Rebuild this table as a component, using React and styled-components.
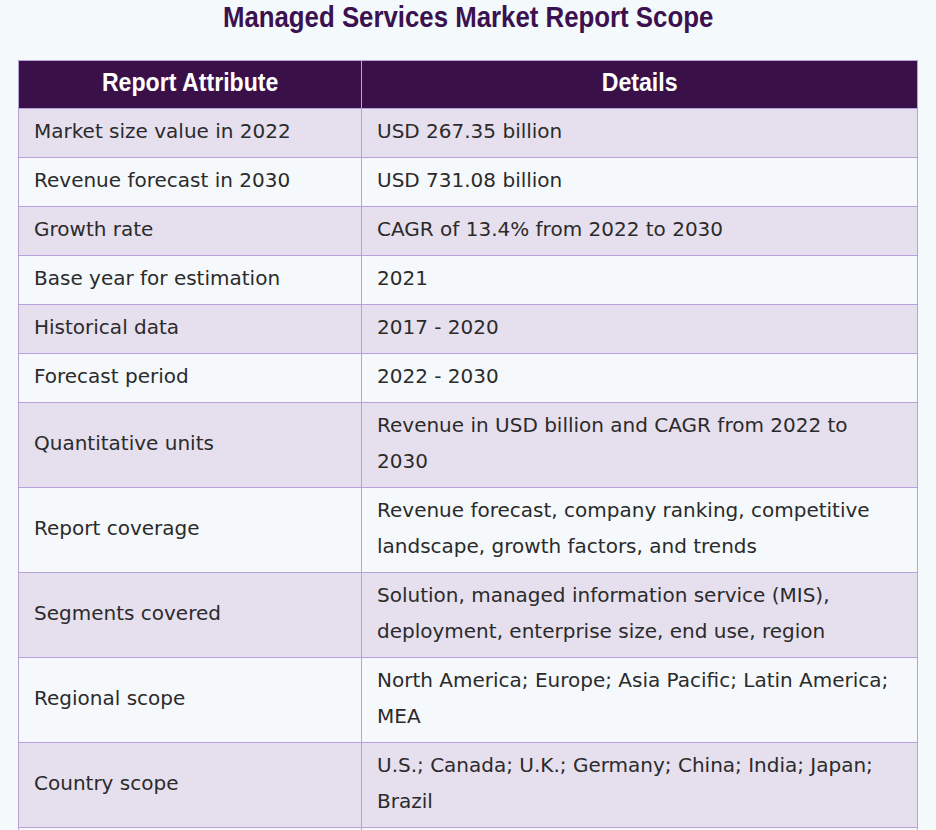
import React from "react";
import styled, { createGlobalStyle } from "styled-components";

const rows = [
	["Market size value in 2022", "USD 267.35 billion"],
	["Revenue forecast in 2030", "USD 731.08 billion"],
	["Growth rate", "CAGR of 13.4% from 2022 to 2030"],
	["Base year for estimation", "2021"],
	["Historical data", "2017 - 2020"],
	["Forecast period", "2022 - 2030"],
	["Quantitative units", "Revenue in USD billion and CAGR from 2022 to 2030"],
	["Report coverage", "Revenue forecast, company ranking, competitive landscape, growth factors, and trends"],
	["Segments covered", "Solution, managed information service (MIS), deployment, enterprise size, end use, region"],
	["Regional scope", "North America; Europe; Asia Pacific; Latin America; MEA"],
	["Country scope", "U.S.; Canada; U.K.; Germany; China; India; Japan; Brazil"],
];

function App() {
	return (
		<Page>
			<GlobalStyle />
			<Title>
				<Narrow $scale={0.86}>Managed Services Market Report Scope</Narrow>
			</Title>
			<Table>
				<thead>
					<tr>
						<Th>
							<Narrow $scale={0.89}>Report Attribute</Narrow>
						</Th>
						<Th>
							<Narrow $scale={0.89}>Details</Narrow>
						</Th>
					</tr>
				</thead>
				<tbody>
					{rows.map(([attr, detail], i) => (
						<Row key={attr} $odd={i % 2 === 0}>
							<Td>{attr}</Td>
							<Td>{detail}</Td>
						</Row>
					))}
					{/* next row continues below the fold */}
					<Row $odd={false}>
						<Td />
						<Td />
					</Row>
				</tbody>
			</Table>
		</Page>
	);
}

const GlobalStyle = createGlobalStyle`
	body {
		margin: 0;
		background: #f4f9fc;
		overflow: hidden;
	}
`;

const Page = styled.div`
	padding: 0 18px;
	font-family: "DejaVu Sans", Verdana, sans-serif;
	color: #2b2b2b;
`;

// condensed look, no narrow font installed
const Narrow = styled.span`
	display: inline-block;
	transform: scaleX(${(p) => p.$scale});
	white-space: nowrap;
`;

const Title = styled.h1`
	margin: 0;
	padding: 1px 0 0;
	height: 60px;
	text-align: center;
	font-family: "Liberation Sans", Arial, sans-serif;
	font-weight: 700;
	font-size: 30px;
	line-height: 32px;
	color: #3b1150;
	box-sizing: border-box;
`;

const Table = styled.table`
	width: 900px;
	border-collapse: collapse;
	table-layout: fixed;
	border: 1px solid #b9a2dc;
`;

const Th = styled.th`
	background: #3a1048;
	color: #fff;
	font-family: "Liberation Sans", Arial, sans-serif;
	font-weight: 700;
	font-size: 26px;
	line-height: 30px;
	height: 48px;
	padding: 0 0 6px;
	border: 1px solid #b9a2dc;
	text-align: center;
	box-sizing: border-box;
	&:first-child {
		width: 343px;
	}
`;

const Row = styled.tr`
	background: ${(p) => (p.$odd ? "#e6dfee" : "#f5f9fc")};
`;

const Td = styled.td`
	border: 1px solid #b9a2dc;
	padding: 4px 20px 8px 15px;
	height: 36px;
	font-size: 20px;
	line-height: 36px;
	vertical-align: middle;
`;

export default App;
